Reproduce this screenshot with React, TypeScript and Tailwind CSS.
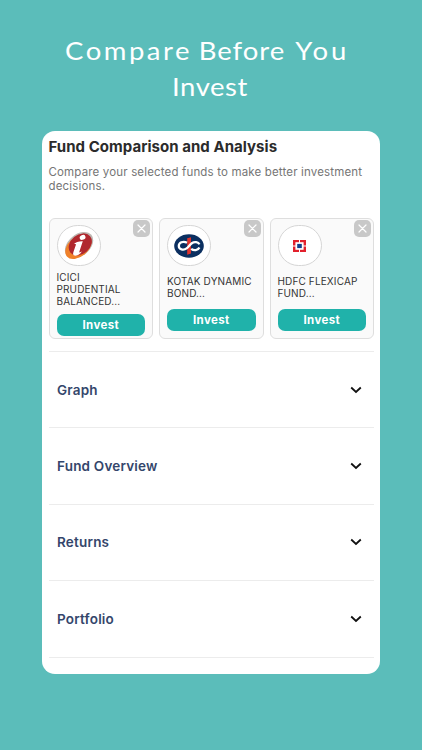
import { ReactNode } from "react";

interface Fund {
  id: string;
  nameLines: string[];
  logo: ReactNode;
}

function IciciLogo() {
  return (
    <svg width="32" height="30" viewBox="0 0 32 30">
      <g transform="rotate(-40 16 15)">
        <ellipse cx="16.6" cy="14.4" rx="16" ry="10.8" fill="#bdb8b3" />
        <ellipse cx="15" cy="15.2" rx="15" ry="9.8" fill="#f0812a" />
        <ellipse cx="18" cy="14.6" rx="12.8" ry="9.6" fill="#b0282e" />
      </g>
      <ellipse cx="19.6" cy="6.4" rx="3" ry="2.3" transform="rotate(-25 19.6 6.4)" fill="#fff" />
      <path d="M10.4 13.4C13 11 16 10 19.8 10.2L16.4 20.6C16.2 22 17.4 21.4 19 20.2C17 23.4 14 25.2 11.4 24.6C9.6 24 10 22.2 10.6 20.4L13 13.6C12.4 13 11.6 13 10.4 13.4Z" fill="#fff" />
    </svg>
  );
}

function KotakLogo() {
  return (
    <svg width="30" height="24" viewBox="0 0 30 24">
      <ellipse cx="15" cy="12" rx="14.8" ry="11.7" fill="#0b2f60" />
      <path d="M13.2 4.2L17 3.2V19.6L13.2 20.8Z" fill="#e0322c" />
      <path
        d="M13 8.8C9 6.4 4.8 8.8 4.8 12C4.8 15.4 9.4 16.8 12.6 14.4C14.6 12.9 15.6 10.8 17.8 9.2C20.4 7.4 24.4 8 25.4 10.4M25.4 13.6C24 16.6 19.8 17 17.2 14.8"
        fill="none"
        stroke="#fff"
        strokeWidth="2.3"
      />
    </svg>
  );
}

function HdfcLogo() {
  return (
    <svg width="13" height="12" viewBox="0 0 13 12">
      <rect width="13" height="12" fill="#e2202c" />
      <rect x="2.4" y="2.2" width="8.2" height="7.6" fill="#fff" />
      <path d="M6.5 0V12M0 6H13" stroke="#fff" strokeWidth="1" />
      <rect x="4.2" y="3.9" width="4.6" height="4.2" fill="#123f8c" />
    </svg>
  );
}

const funds: Fund[] = [
  { id: "icici", nameLines: ["ICICI", "PRUDENTIAL", "BALANCED..."], logo: <IciciLogo /> },
  { id: "kotak", nameLines: ["KOTAK DYNAMIC", "BOND..."], logo: <KotakLogo /> },
  { id: "hdfc", nameLines: ["HDFC FLEXICAP", "FUND..."], logo: <HdfcLogo /> },
];

const sections = ["Graph", "Fund Overview", "Returns", "Portfolio"];

function FundCard({ fund }: { fund: Fund }) {
  const nameClass = fund.nameLines.length > 2 ? "h-[48px]" : "h-[43px]";

  return (
    <div className="relative flex h-[120.5px] flex-col rounded-[6px] border border-[#dedede] bg-[#fafafa] px-[7px] pt-[6px]">
      {/* Remove */}
      <button className="absolute top-[1px] right-[2px] flex h-[16.5px] w-[17px] items-center justify-center rounded-[5px] bg-[#c8c8c8]">
        <svg width="9" height="9" viewBox="0 0 9 9">
          <path d="M1 1L8 8M8 1L1 8" stroke="#fff" strokeWidth="1.2" strokeLinecap="round" />
        </svg>
      </button>

      {/* Logo */}
      <div className="flex h-[41px] w-[44px] shrink-0 items-center justify-center rounded-full border border-[#d5d5d5] bg-white">
        {fund.logo}
      </div>

      {/* Name */}
      <div className={`flex shrink-0 flex-col justify-center text-[10px] leading-[11.7px] tracking-[0.14px] whitespace-nowrap text-[#333] ${nameClass}`}>
        {fund.nameLines.map((line) => (
          <span key={line}>{line}</span>
        ))}
      </div>

      <button className="h-[21.5px] shrink-0 rounded-[7px] bg-[#20b2aa] text-[11.5px] leading-[22.5px] font-bold tracking-[0.35px] text-white">
        Invest
      </button>
    </div>
  );
}

function Section({ title }: { title: string }) {
  return (
    <div className="flex h-[76.4px] items-center justify-between border-t border-[#ececec] pr-[12px] pl-[8.5px]">
      <span className="text-[13.5px] font-semibold tracking-[0.2px] text-[#34466b]">{title}</span>
      <svg width="12" height="8" viewBox="0 0 12 8">
        <path d="M1.2 1.5L6 6L10.8 1.5" fill="none" stroke="#111" strokeWidth="1.8" />
      </svg>
    </div>
  );
}

export default function App() {
  return (
    <div className="flex h-[750px] w-[422px] flex-col overflow-hidden bg-[#5bbdba] font-['Inter',sans-serif]">
      <h1 className="h-[131px] shrink-0 pt-[32px] font-['Lato',sans-serif] text-[25px] leading-[36px] whitespace-nowrap text-white">
        <span className="ml-[64.5px] flex origin-left scale-x-110">
          <span className="tracking-[2.3px]">Compare</span>
          <span className="ml-[6px] tracking-[0.9px]">Before</span>
          <span className="ml-[9px] tracking-[2.8px]">You</span>
        </span>
        <span className="ml-[172px] block origin-left scale-x-110 tracking-[0.5px]">Invest</span>
      </h1>

      <main className="ml-[42px] h-[543px] w-[338px] shrink-0 overflow-hidden rounded-[13px] bg-white pr-[6px] pl-[6.5px]">
        <h2 className="pt-[6px] text-[15px] leading-[20px] font-bold tracking-[0.04px] text-[#2b2b2b]">Fund Comparison and Analysis</h2>
        <p className="mt-[8px] text-[11.5px] leading-[14px] tracking-[0.16px] whitespace-nowrap text-[#757575]">
          Compare your selected funds to make better investment
          <br />
          decisions.
        </p>

        <div className="mt-[25px] grid grid-cols-3 gap-[6px]">
          {funds.map((fund) => (
            <FundCard key={fund.id} fund={fund} />
          ))}
        </div>

        <div className="mt-[12.5px] border-b border-[#ececec]">
          {sections.map((title) => (
            <Section key={title} title={title} />
          ))}
        </div>
      </main>
    </div>
  );
}
